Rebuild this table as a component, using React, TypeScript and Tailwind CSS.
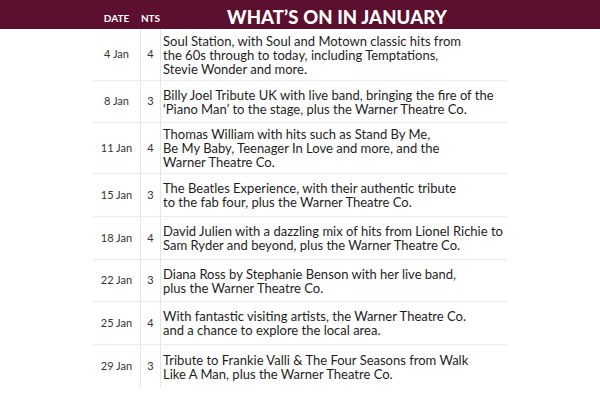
const events = [
  { date: '4 Jan', nts: 4, h: 'h-[52px]', lines: ['Soul Station, with Soul and Motown classic hits from', 'the 60s through to today, including Temptations,', 'Stevie Wonder and more.'] },
  { date: '8 Jan', nts: 3, h: 'h-[42px]', lines: ['Billy Joel Tribute UK with live band, bringing the fire of the', '\u2018Piano Man\u2019 to the stage, plus the Warner Theatre Co.'] },
  { date: '11 Jan', nts: 4, h: 'h-[51px]', lines: ['Thomas William with hits such as Stand By Me,', 'Be My Baby, Teenager In Love and more, and the', 'Warner Theatre Co.'] },
  { date: '15 Jan', nts: 3, h: 'h-[43px]', lines: ['The Beatles Experience, with their authentic tribute', 'to the fab four, plus the Warner Theatre Co.'] },
  { date: '18 Jan', nts: 4, h: 'h-[43px]', lines: ['David Julien with a dazzling mix of hits from Lionel Richie to', 'Sam Ryder and beyond, plus the Warner Theatre Co.'] },
  { date: '22 Jan', nts: 3, h: 'h-[42px]', lines: ['Diana Ross by Stephanie Benson with her live band,', 'plus the Warner Theatre Co.'] },
  { date: '25 Jan', nts: 4, h: 'h-[43px]', lines: ['With fantastic visiting artists, the Warner Theatre Co.', 'and a chance to explore the local area.'] },
  { date: '29 Jan', nts: 3, h: 'h-[43px]', lines: ['Tribute to Frankie Valli & The Four Seasons from Walk', 'Like A Man, plus the Warner Theatre Co.'] },
];

export default function App() {
  return (
    <div className="w-[600px] h-[400px] bg-white overflow-hidden" style={{ fontFamily: 'Lato, "Open Sans", sans-serif' }}>
      <div className="h-[29px] bg-[#5c0f2f] flex items-end pl-[93px] pb-[6px]">
        <div className="w-[47px] text-center text-[10px] font-bold text-white leading-none">DATE</div>
        <div className="w-[21px] text-center text-[10px] font-bold text-white leading-none">NTS</div>
        <div className="ml-[66px] text-[18.5px] font-black text-white leading-none tracking-[0.1px] -mb-[3px]">WHAT&rsquo;S ON IN JANUARY</div>
      </div>

      <div className="ml-[93px] w-[414px]">
        {events.map((e, i) => (
          <div key={e.date} className={`flex ${e.h} ${i < events.length - 1 ? 'border-b border-[#ececec]' : ''}`}>
            <div className="w-[47px] flex items-center justify-center text-[11px] text-[#333]">{e.date}</div>
            <div className="w-[21px] border-l border-r border-[#e6e6e6] flex items-center justify-center text-[11px] text-[#333]">{e.nts}</div>
            <div className="flex-1 flex flex-col justify-center pl-[2px] text-[13px] leading-[14px] text-[#1e1e1e]">
              {e.lines.map((l) => (
                <span key={l} className="whitespace-nowrap">{l}</span>
              ))}
            </div>
          </div>
        ))}
      </div>
    </div>
  );
}
